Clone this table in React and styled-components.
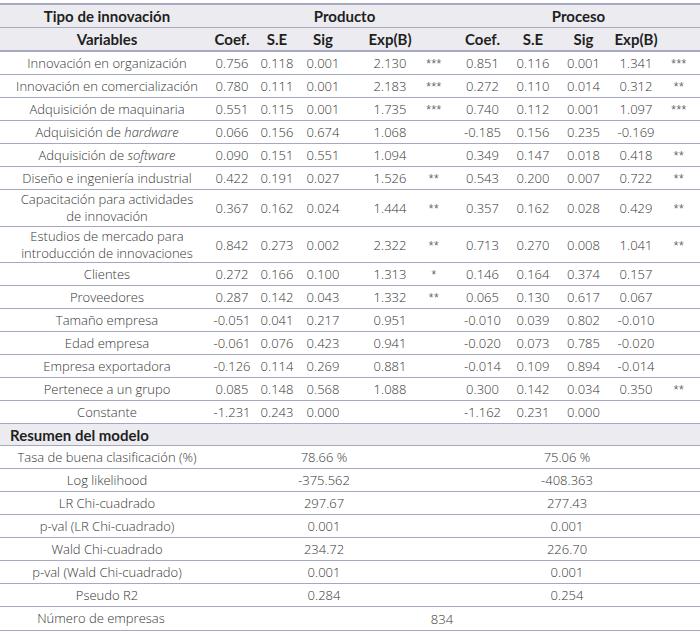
import React from 'react';
import styled, { createGlobalStyle } from 'styled-components';

const GlobalStyle = createGlobalStyle`
    body {
        margin: 0;
        background: #ffffff;
        font-family: 'Open Sans', 'Lato', sans-serif;
    }
`;

const cols = '214px 40px 46px 57px 54px 46px 51px 50px 51px 49px 42px';
// extra padding per column to put the text centre where the reference has it
const pads = ['0', '0 4px 0 0', '0', '0 11px 0 0', '0 0 0 12px', '0', '0', '0', '0', '0 0 0 5px', '0'];

const Table = styled.div`
    width: 700px;
    padding-top: 3px;
    color: #3c3c3c;
`;

const Row = styled.div`
    display: grid;
    grid-template-columns: ${(p) => p.$cols || cols};
    height: ${(p) => p.$h || 23}px;
    box-sizing: border-box;
    border-top: ${(p) => (p.$first ? '2px solid #a7a7c2' : 'none')};
    border-bottom: ${(p) => (p.$thick ? '2px' : '1px')} solid #a7a7c2;
    background: ${(p) => (p.$shade ? '#ececf0' : '#ffffff')};
`;

const Cell = styled.div`
    display: flex;
    align-items: center;
    justify-content: ${(p) => (p.$left ? 'flex-start' : 'center')};
    text-align: center;
    padding: ${(p) => p.$pad || '0'};
    grid-column: ${(p) => p.$span || 'auto'};
    font-size: 13px;
    line-height: 18px;
    font-weight: 300;
    white-space: nowrap;
    color: #363636;
`;

const Label = styled(Cell)`
    white-space: normal;
    line-height: 17px;
    padding: ${(p) => p.$pad || '0 6px'};
`;

const HeadCell = styled(Cell)`
    font-family: 'Lato', 'Open Sans', sans-serif;
    font-size: 15px;
    font-weight: 700;
    color: #1f1f1f;
`;

const Stars = styled(Cell)`
    font-family: 'Liberation Sans', sans-serif;
    font-size: 12px;
    line-height: 12px;
    color: #6a6a6a;
    align-items: flex-start;
    padding-top: ${(p) => (p.$tall ? 13 : 6)}px;
    letter-spacing: 0.5px;
`;

const rows = [
    ['Innovación en organización', '0.756', '0.118', '0.001', '2.130', '***', '0.851', '0.116', '0.001', '1.341', '***'],
    ['Innovación en comercialización', '0.780', '0.111', '0.001', '2.183', '***', '0.272', '0.110', '0.014', '0.312', '**'],
    ['Adquisición de maquinaria', '0.551', '0.115', '0.001', '1.735', '***', '0.740', '0.112', '0.001', '1.097', '***'],
    [<>Adquisición de <i>hardware</i></>, '0.066', '0.156', '0.674', '1.068', '', '-0.185', '0.156', '0.235', '-0.169', ''],
    [<>Adquisición de <i>software</i></>, '0.090', '0.151', '0.551', '1.094', '', '0.349', '0.147', '0.018', '0.418', '**'],
    ['Diseño e ingeniería industrial', '0.422', '0.191', '0.027', '1.526', '**', '0.543', '0.200', '0.007', '0.722', '**'],
    [<>Capacitación para actividades<br />de innovación</>, '0.367', '0.162', '0.024', '1.444', '**', '0.357', '0.162', '0.028', '0.429', '**', 37],
    [<>Estudios de mercado para<br />introducción de innovaciones</>, '0.842', '0.273', '0.002', '2.322', '**', '0.713', '0.270', '0.008', '1.041', '**', 36],
    ['Clientes', '0.272', '0.166', '0.100', '1.313', '*', '0.146', '0.164', '0.374', '0.157', ''],
    ['Proveedores', '0.287', '0.142', '0.043', '1.332', '**', '0.065', '0.130', '0.617', '0.067', ''],
    ['Tamaño empresa', '-0.051', '0.041', '0.217', '0.951', '', '-0.010', '0.039', '0.802', '-0.010', ''],
    ['Edad empresa', '-0.061', '0.076', '0.423', '0.941', '', '-0.020', '0.073', '0.785', '-0.020', ''],
    ['Empresa exportadora', '-0.126', '0.114', '0.269', '0.881', '', '-0.014', '0.109', '0.894', '-0.014', ''],
    ['Pertenece a un grupo', '0.085', '0.148', '0.568', '1.088', '', '0.300', '0.142', '0.034', '0.350', '**'],
    ['Constante', '-1.231', '0.243', '0.000', '', '', '-1.162', '0.231', '0.000', '', ''],
];

const summary = [
    ['Tasa de buena clasificación (%)', '78.66 %', '75.06 %'],
    ['Log likelihood', '-375.562', '-408.363'],
    ['LR Chi-cuadrado', '297.67', '277.43'],
    ['p-val (LR Chi-cuadrado)', '0.001', '0.001'],
    ['Wald Chi-cuadrado', '234.72', '226.70'],
    ['p-val (Wald Chi-cuadrado)', '0.001', '0.001'],
    ['Pseudo R2', '0.284', '0.254'],
];

const sumCols = '214px 220px 1fr';
const heads = ['Variables', 'Coef.', 'S.E', 'Sig', 'Exp(B)', '', 'Coef.', 'S.E', 'Sig', 'Exp(B)', ''];

const App = () => (
    <>
        <GlobalStyle />
        <Table>
            <Row $first $shade $h={25}>
                <HeadCell>Tipo de innovación</HeadCell>
                <HeadCell $span="2 / 7" $pad="0 0 0 18px">Producto</HeadCell>
                <HeadCell $span="7 / 12">Proceso</HeadCell>
            </Row>
            <Row $shade $thick $h={24}>
                {heads.map((h, i) => (
                    <HeadCell key={i} $pad={pads[i]}>{h}</HeadCell>
                ))}
            </Row>
            {rows.map((r, i) => (
                <Row key={i} $h={r[11] || 23}>
                    <Label><span>{r[0]}</span></Label>
                    {r.slice(1, 11).map((v, j) =>
                        j === 4 || j === 9 ? (
                            <Stars key={j} $tall={!!r[11]}>{v}</Stars>
                        ) : (
                            <Cell key={j} $pad={pads[j + 1]}>{v}</Cell>
                        )
                    )}
                </Row>
            ))}
            <Row $shade $cols="1fr" $h={22}>
                <HeadCell $left $pad="0 0 0 10px">Resumen del modelo</HeadCell>
            </Row>
            {summary.map((s, i) => (
                <Row key={i} $cols={sumCols} $h={23}>
                    <Label>{s[0]}</Label>
                    <Cell>{s[1]}</Cell>
                    <Cell>{s[2]}</Cell>
                </Row>
            ))}
            <Row $cols={sumCols} $h={24}>
                <Label $pad="0 12px 0 0">Número de empresas</Label>
                <Cell $span="2 / 4" $pad="0 30px 0 0">834</Cell>
            </Row>
        </Table>
    </>
);

export default App;
